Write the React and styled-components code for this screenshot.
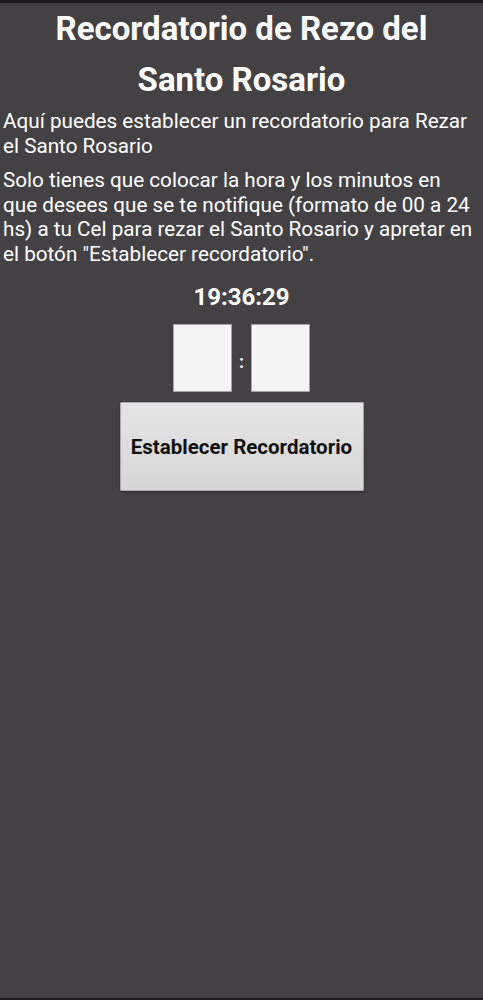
import React from "react";
import styled, { createGlobalStyle } from "styled-components";

const Global = createGlobalStyle`
  html, body { margin: 0; padding: 0; background: #444144; }
  body { font-family: Roboto, "Noto Sans", sans-serif; }
`;

const Screen = styled.div`
  box-sizing: border-box;
  width: 483px;
  height: 1000px;
  background: #444144;
  border-top: 3px solid #1c1b1c;
  border-bottom: 2px solid #1c1b1c;
  display: flex;
  flex-direction: column;
  align-items: stretch;
  color: #ffffff;
  overflow: hidden;
`;

const Title = styled.h1`
  margin: 0;
  font-size: 33px;
  font-weight: 700;
  line-height: 51px;
  text-align: center;
`;

const Paragraph = styled.p`
  margin: ${(p) => p.$top}px 0 0;
  padding: 0 9px 0 3px;
  font-size: 20.7px;
  line-height: 24.5px;
  font-weight: 400;
`;

const Clock = styled.div`
  margin-top: 17px;
  text-align: center;
  font-size: 24px;
  font-weight: 700;
  line-height: 28px;
`;

const TimeRow = styled.div`
  margin-top: 13px;
  display: flex;
  justify-content: center;
  align-items: center;
`;

const Field = styled.input`
  box-sizing: border-box;
  width: 59px;
  height: 68px;
  border: 1px solid #a3a2a4;
  background: #f4f4f5;
  outline: none;
  padding: 0;
  font-size: 20px;
  text-align: center;
`;

const Colon = styled.span`
  width: 19px;
  text-align: center;
  font-size: 18px;
  font-weight: 700;
  line-height: 1;
  color: #ffffff;
  padding-top: 8px;
`;

const ButtonRow = styled.div`
  margin-top: 10px;
  display: flex;
  justify-content: center;
`;

const SetButton = styled.button`
  box-sizing: border-box;
  width: 244px;
  height: 89px;
  border: 1px solid #a9a8aa;
  border-radius: 1px;
  background: linear-gradient(#e4e4e4, #d6d6d6);
  box-shadow: 0 1px 2px rgba(0, 0, 0, 0.35);
  color: #111111;
  font-family: Roboto, "Noto Sans", sans-serif;
  font-size: 20.5px;
  font-weight: 700;
  padding: 0;
  cursor: pointer;
`;

export default function App() {
  return (
    <>
      <Global />
      <Screen>
        <Title>
          Recordatorio de Rezo del
          <br />
          Santo Rosario
        </Title>
        <Paragraph $top={4}>
          Aquí puedes establecer un recordatorio para Rezar el Santo Rosario
        </Paragraph>
        <Paragraph $top={10}>
          Solo tienes que colocar la hora y los minutos en que desees que se te
          notifique (formato de 00 a 24 hs) a tu Cel para rezar el Santo
          Rosario y apretar en el botón "Establecer recordatorio".
        </Paragraph>
        <Clock>19:36:29</Clock>
        <TimeRow>
          <Field aria-label="hora" />
          <Colon>:</Colon>
          <Field aria-label="minutos" />
        </TimeRow>
        <ButtonRow>
          <SetButton>Establecer Recordatorio</SetButton>
        </ButtonRow>
      </Screen>
    </>
  );
}
